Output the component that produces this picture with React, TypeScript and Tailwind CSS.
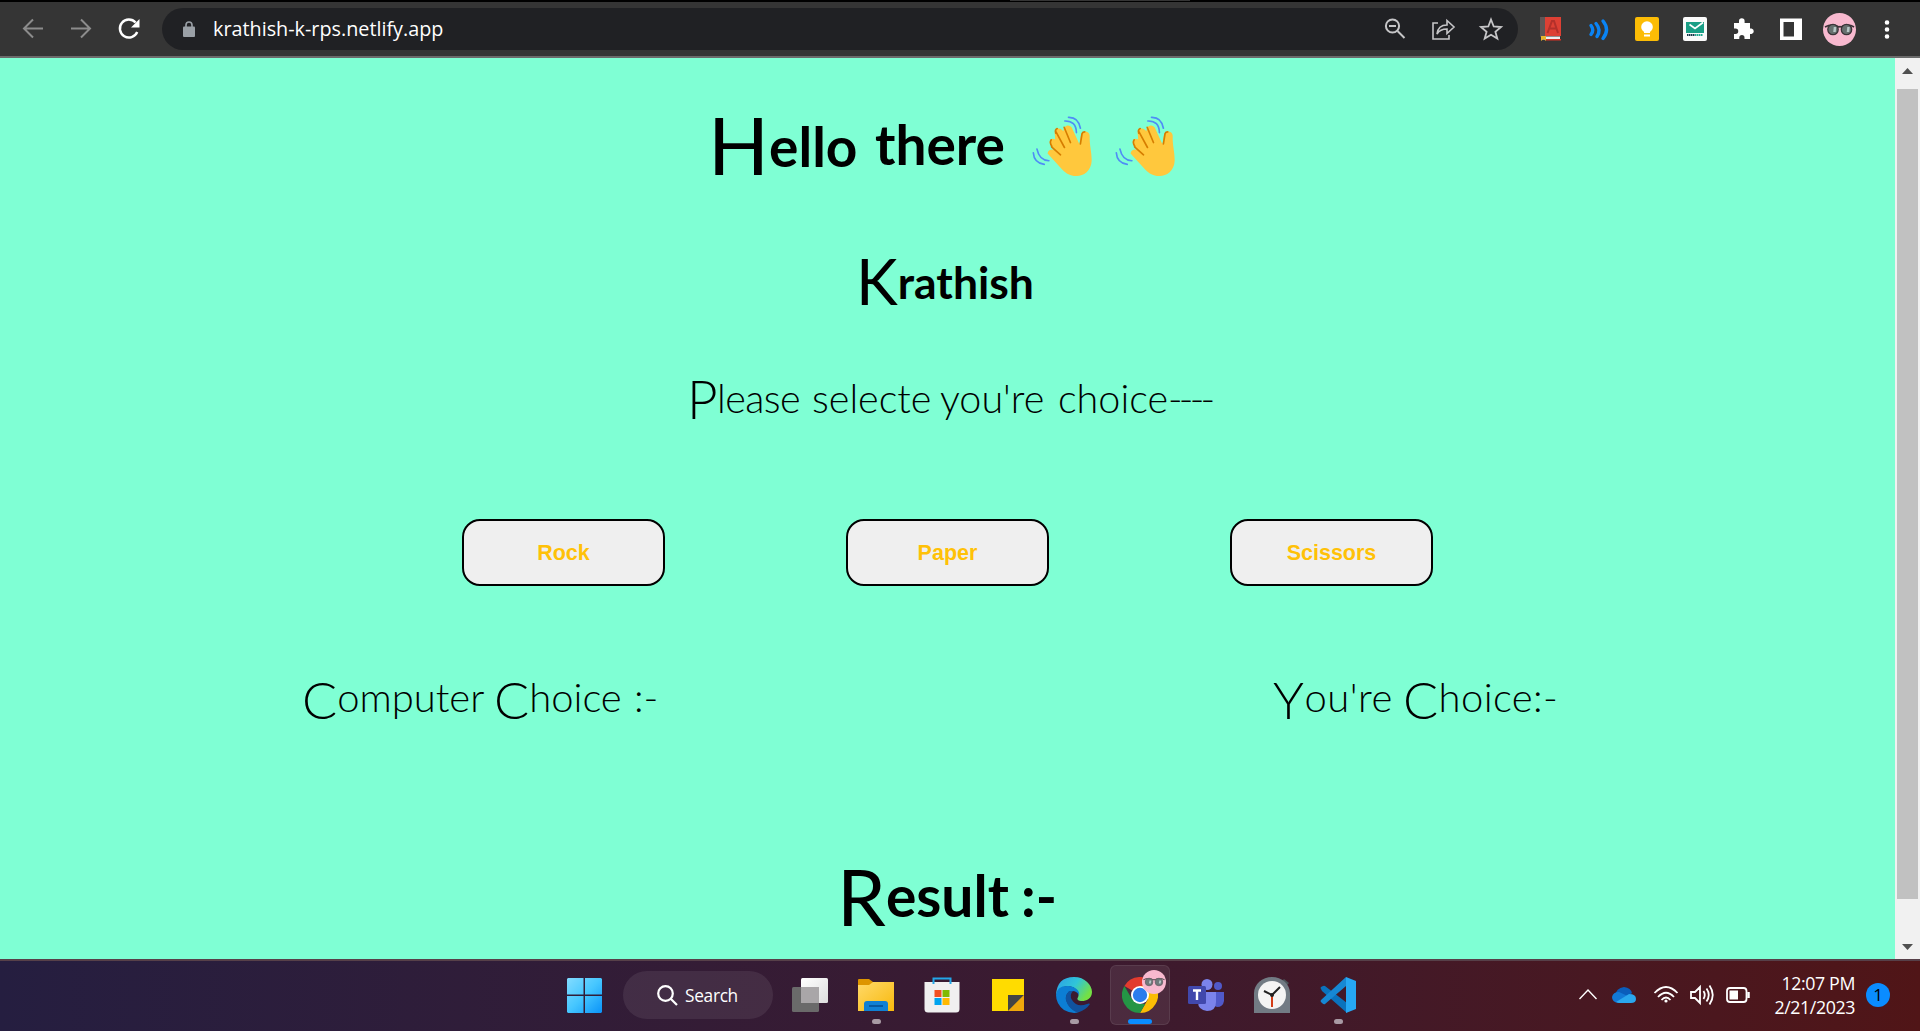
import type { ReactNode } from "react";

function Wave() {
  return (
    <svg viewBox="1025 70 185 190" className="mt-px ml-px h-[63px] w-[62px] shrink-0">
      <path d="M1071 186C1072 175 1085 170 1092 177L1078 155C1075 142 1086 138 1094 144L1093 130C1089 115 1103 106 1113 114L1119 119C1117 103 1135 95 1144 108L1167 158L1171 133C1173 117 1196 115 1198 132C1197 162 1204 180 1204 207C1203 239 1178 255 1157 254C1139 253 1128 247 1115 234Z" fill="#ffc83d" />
      <path d="M1083 166L1110 190M1096 120L1122 168M1121 107L1140 153M1170 157L1175 126Q1177 121 1183 121M1082 145Q1076 153 1084 165M1100 111Q1092 115 1096 125" fill="none" stroke="#d67d00" strokeWidth="5" strokeLinecap="round" />
      <path d="M1134 77Q1164 76 1170 110M1123 88Q1157 87 1158 123M1039 173Q1046 207 1075 208M1028 184Q1030 215 1061 219" fill="none" stroke="#4f8df5" strokeWidth="5" strokeLinecap="round" />
    </svg>
  );
}

function Avatar({ className }: { className: string }) {
  return (
    <svg viewBox="0 0 34 34" className={className}>
      <circle cx="17" cy="17" r="17" fill="#f8b9cf" />
      <path d="M2 14Q9 10 16 14Q17 13 18 14Q25 10 32 14" fill="none" stroke="#5b5358" strokeWidth="1.6" />
      <circle cx="10" cy="17" r="5.4" fill="#6f797b" stroke="#6b6368" strokeWidth="1.2" />
      <circle cx="24" cy="17" r="5.4" fill="#6f797b" stroke="#6b6368" strokeWidth="1.2" />
      <path d="M12 15L11 19M26 15L25 19" stroke="#b8c8c8" strokeWidth="2.5" />
    </svg>
  );
}

function Toolbar() {
  return (
    <header className="flex h-[58px] flex-col border-b-2 border-[#6b6b6b] bg-[#353535]">
      <div className="h-[2px] shrink-0 bg-black pl-[1010px]">
        <div className="h-px w-[180px] bg-[#353535]" />
      </div>
      <div className="flex h-[54px] items-center">
        <svg viewBox="0 0 162 54" className="h-[54px] w-[162px] shrink-0" fill="none">
          <path d="M43 26.5H24M33 17.5L24 26.5L33 35.5M71 26.5H90M81 17.5L90 26.5L81 35.5" stroke="#8c8c8c" strokeWidth="2" />
          <path d="M137.2 30A9 9 0 1 1 135.6 20.5" stroke="#fff" strokeWidth="2.4" />
          <path d="M139.500 17V25.500H131Z" fill="#fff" />
        </svg>
        <div className="flex h-[42px] w-[1356px] items-center rounded-full bg-[#202124]">
          <svg viewBox="0 0 12 16" className="ml-[21px] h-4 w-3">
            <rect y="5.500" width="12" height="10.500" rx="1" fill="#9aa0a6" />
            <path d="M3 6V4A3 3 0 0 1 9 4V6" fill="none" stroke="#9aa0a6" strokeWidth="1.6" />
          </svg>
          <span className="ml-[18px] whitespace-nowrap font-['Open_Sans','Noto_Sans',sans-serif] text-[19.8px] text-white">krathish-k-rps.netlify.app</span>
          <svg viewBox="1375 0 143 42" className="ml-auto h-[42px] w-[143px]" fill="none" stroke="#c6c6c8" strokeWidth="2">
            <circle cx="1392.500" cy="18" r="6.600" />
            <path d="M1397.500 23L1404.500 30M1389 18H1396" />
            <path d="M1438 15H1433V31H1449V27M1437 26Q1438 17 1447 17V12.500L1454 19L1447 25.500V21Q1440 21 1437 26Z" strokeWidth="1.600" />
            <path d="M1491 11.500L1493.700 18.500L1501 19L1495.400 23.700L1497.300 30.500L1491 26.700L1484.700 30.500L1486.600 23.700L1481 19L1488.300 18.500Z" strokeWidth="1.800" />
          </svg>
        </div>
        <svg viewBox="1518 2 402 54" className="h-[54px] w-[402px] shrink-0">
          <rect x="1540" y="17" width="6" height="20" fill="#5f5555" />
          <rect x="1545" y="17" width="16" height="19" fill="#dd4034" />
          <path d="M1547.500 33L1552 21H1554L1558 33M1549 28.500H1556.500" fill="none" stroke="#b3302a" strokeWidth="2" />
          <rect x="1542" y="36.500" width="18" height="3" fill="#eee" />
          <path d="M1541 36H1546V41L1543.500 39L1541 41Z" fill="#e9b52c" />
          <rect x="1546" y="39" width="15" height="1.500" fill="#d33227" />
          <g fill="none" stroke="#0a84f5" strokeWidth="3.400" strokeLinecap="round">
            <path d="M1591 25.500Q1594.500 30 1591 34.500" />
            <path d="M1596 23.500Q1601.500 30 1597 36.500" />
            <path d="M1603 21Q1610 29.500 1603 38.500" />
          </g>
          <rect x="1635" y="17" width="24" height="24" rx="2" fill="#fcbc05" />
          <circle cx="1647" cy="27" r="5.800" fill="#fff" />
          <path d="M1644 30H1650V33H1644ZM1644 34.500H1650V36.500H1644Z" fill="#fff" />
          <rect x="1683" y="17" width="24" height="24" rx="2" fill="#fafafa" />
          <rect x="1686" y="22" width="18" height="11" fill="#1a9e85" />
          <path d="M1689.500 24.500L1695 28.500L1703 22.500" fill="none" stroke="#fff" strokeWidth="1.700" />
          <path d="M1687 35H1695" stroke="#17394a" strokeWidth="2" strokeDasharray="1.500 .5" />
          <path d="M1695 35H1703" stroke="#1fa88e" strokeWidth="2" strokeDasharray="1.500 .5" />
          <path d="M1734 23H1739V21A2.800 2.800 0 0 1 1744.600 21V23H1750V28.500H1751.500A2.800 2.800 0 0 1 1751.500 34H1750V39H1744.500V37.500A2.600 2.600 0 0 0 1739.300 37.500V39H1734V34H1735.500A2.700 2.700 0 0 0 1735.500 28.500H1734Z" fill="#fff" />
          <path d="M1780 18.500H1802V40H1780ZM1783.500 22V36.500H1794V22Z" fillRule="evenodd" fill="#fff" />
          <g transform="translate(1823 13)">
            <circle cx="16.500" cy="16.500" r="16.500" fill="#f8b9cf" />
            <path d="M2 14Q9 10 16 14Q17 13 18 14Q25 10 31 14" fill="none" stroke="#3b3338" strokeWidth="1.600" />
            <circle cx="10" cy="16.500" r="5.200" fill="#66706f" stroke="#3b3338" strokeWidth="1.300" />
            <circle cx="23.500" cy="16.500" r="5.200" fill="#66706f" stroke="#3b3338" strokeWidth="1.300" />
            <path d="M12 14L11.500 19M25.500 14L25 19" stroke="#b6c6c6" strokeWidth="2.500" />
          </g>
          <path d="M1887 22.500h.01M1887 29.500h.01M1887 36.500h.01" stroke="#fff" strokeWidth="4.600" strokeLinecap="round" />
        </svg>
      </div>
    </header>
  );
}

function Choice({ children }: { children: string }) {
  return (
    <button className="h-[67px] w-[203px] rounded-[18px] border-2 border-black bg-[#efefef] pt-[2px] font-['Liberation_Sans',Arial,sans-serif] text-[21.5px] font-bold text-[#ffc107]">
      {children}
    </button>
  );
}

function Game() {
  return (
    <main className="flex h-[901px] min-w-0 flex-1 flex-col bg-[#7fffd4] font-['Lato',sans-serif] whitespace-nowrap text-black">
      <h1 className="flex h-[140px] pt-[56px] pl-[708px] text-[55px] leading-[60px] font-bold">
        <span className="block w-[167px] first-letter:align-[-8px] first-letter:text-[80px] first-letter:font-normal">Hello</span>
        <span className="block w-[156px]">there</span>
        <span className="flex gap-5"><Wave /><Wave /></span>
      </h1>
      <h2 className="h-[110px] pt-[58px] pl-[856px] text-[44.5px] leading-[50px] font-bold">
        <span className="block first-letter:align-[-6px] first-letter:text-[63px] first-letter:font-normal">Krathish</span>
      </h2>
      <p className="flex h-[211px] pt-[65px] pl-[687px] text-[39.5px] leading-[50px] font-light">
        <span className="block w-[125px] tracking-[-0.6px] first-letter:align-[-6px] first-letter:text-[53px]">Please</span>
        <span className="block w-[128px]">selecte</span>
        <span className="block w-[118px]">you're</span>
        <span className="block">choice<span className="tracking-[-3.8px]">----</span></span>
      </p>
      <div className="flex h-[67px] gap-[181px] pl-[462px]">
        <Choice>Rock</Choice>
        <Choice>Paper</Choice>
        <Choice>Scissors</Choice>
      </div>
      <div className="flex h-[200px] pt-[86px] pl-[302px] text-[40px] leading-[50px] font-light">
        <p className="flex w-[971px]">
          <span className="block w-[192px] first-letter:align-[-7px] first-letter:text-[52px]">Computer</span>
          <span className="block w-[140px] first-letter:align-[-7px] first-letter:text-[52px]">Choice</span>
          <span>:-</span>
        </p>
        <p className="flex">
          <span className="block w-[130px] tracking-[0.5px] first-letter:align-[-7px] first-letter:text-[52px]">You're</span>
          <span className="block tracking-[0.4px] first-letter:align-[-7px] first-letter:text-[52px]">Choice:-</span>
        </p>
      </div>
      <h1 className="flex pt-[79px] pl-[837px] text-[57px] leading-[60px] font-bold">
        <span className="block w-[184px] first-letter:align-[-9px] first-letter:text-[78px] first-letter:font-normal">Result</span>
        <span>:-</span>
      </h1>
    </main>
  );
}

function Scrollbar() {
  return (
    <div className="flex h-[901px] w-[25px] flex-col items-center bg-[#f1f1f1]">
      <svg viewBox="0 0 25 31" className="h-[31px] w-[25px]"><path d="M7 16L12.500 10L18 16Z" fill="#505050" /></svg>
      <div className="h-[810px] w-[21px] bg-[#c1c1c1]" />
      <svg viewBox="0 0 25 60" className="h-[60px] w-[25px]"><path d="M7 45L12.500 51L18 45Z" fill="#505050" /></svg>
    </div>
  );
}

function TaskItem({ children, dot = false, active = false }: { children: ReactNode; dot?: boolean; active?: boolean }) {
  return (
    <div className={active ? "relative mx-[3px] flex h-[60px] w-[60px] items-center justify-center rounded-md border border-white/8 bg-white/8" : "relative mx-[3px] flex h-[60px] w-[60px] items-center justify-center"}>
      {children}
      {dot && <i className="absolute bottom-px h-[5px] w-[9px] rounded-full bg-[#a89aa4]" />}
      {active && <i className="absolute bottom-0 h-[5px] w-6 rounded-full bg-[#0a8cff]" />}
    </div>
  );
}

const icon = "h-9 w-9";

function Taskbar() {
  return (
    <footer className="flex h-[72px] border-t-2 border-[#574049] bg-linear-to-r from-[#251e40] via-[#3b1a30] via-55% to-[#501517] pt-1 font-['Open_Sans','Noto_Sans',sans-serif] text-white">
      <div className="flex h-[60px] w-[1579px] items-center pl-[567px]">
        <svg viewBox="0 0 35 35" className="h-[35px] w-[35px]">
          <defs><linearGradient id="win" x2="1" y2="1"><stop stopColor="#83dcff" /><stop offset=".5" stopColor="#45c6ff" /><stop offset="1" stopColor="#0a93f8" /></linearGradient></defs>
          <path d="M1 0H16.500V16.500H0V1ZM18 0H34L35 1V16.500H18ZM0 18H16.500V35H1L0 34ZM18 18H35V34L34 35H18Z" fill="url(#win)" />
        </svg>
        <div className="ml-[21px] flex h-12 w-[150px] items-center rounded-full bg-white/8">
          <svg viewBox="0 0 21 21" className="ml-[34px] h-[21px] w-[21px]" fill="none" stroke="#fff" strokeWidth="2.200"><circle cx="8.500" cy="8.500" r="7.300" /><path d="M13.700 13.700L20 20" /></svg>
          <span className="ml-[7px] pt-px text-[17.300px] tracking-[-0.3px]">Search</span>
        </div>
        <div className="ml-[4px] flex">
          <TaskItem>
            <svg viewBox="0 0 36 36" className={icon}>
              <defs><linearGradient id="tv" x2="1" y2="1"><stop stopColor="#fff" /><stop offset="1" stopColor="#ddd" /></linearGradient></defs>
              <rect x="9" y="1" width="27" height="25" rx="1.500" fill="url(#tv)" /><rect y="10" width="27" height="25" rx="1.500" fill="#6a6a6a" /><path d="M9 10H27V26H9Z" fill="#a9a6a8" />
            </svg>
          </TaskItem>
          <TaskItem dot>
            <svg viewBox="0 0 36 36" className={icon}>
              <defs><linearGradient id="fo" x2="1" y2="1"><stop stopColor="#ffd969" /><stop offset="1" stopColor="#f8b90d" /></linearGradient></defs>
              <path d="M0 3Q0 2 1 2H11L15 5V9H0Z" fill="#dd9500" /><path d="M0 8H11L15 5H36V34H0Z" fill="url(#fo)" /><path d="M6 34V27Q6 24 9 24H27Q30 24 30 27V34Z" fill="#1080d4" /><path d="M11 29H25" stroke="#064f93" strokeWidth="1.600" />
            </svg>
          </TaskItem>
          <TaskItem>
            <svg viewBox="0 0 36 36" className={icon}>
              <path d="M.5 5H35.500V32Q35.500 35.500 32 35.500H4Q.5 35.500 .5 32Z" fill="#f0f0f0" /><path d="M9.500 7V1.500H26.500V7" fill="none" stroke="#22a7e8" strokeWidth="2" /><path d="M10.500 13H17.500V20H10.500Z" fill="#f25022" /><path d="M18.500 13H25.500V20H18.500Z" fill="#7fba00" /><path d="M10.500 21H17.500V28H10.500Z" fill="#00a4ef" /><path d="M18.500 21H25.500V28H18.500Z" fill="#ffb900" />
            </svg>
          </TaskItem>
          <TaskItem>
            <svg viewBox="0 0 36 36" className={icon}><path d="M2 2H34V18L18 34H2Z" fill="#ffdc00" /><path d="M18 18H34L18 34Z" fill="#444" /><path d="M34 18V34H18Z" fill="#efa80c" /></svg>
          </TaskItem>
          <TaskItem dot>
            <svg viewBox="0 0 36 36" className={icon}>
              <defs><linearGradient id="ed" x2="1" y2=".5"><stop stopColor="#2b9de8" /><stop offset=".55" stopColor="#30c5d8" /><stop offset="1" stopColor="#74e044" /></linearGradient></defs>
              <path d="M0 18Q1 0 18 0C29 0 36 8 36 15C36 24 25 25.500 22 23C20 21 24 20 22 15Q19 9 11 9Q3 10 0 18Z" fill="url(#ed)" />
              <path d="M0 18Q1 8 13 9C20 10 24 14 23 18C20 13 14 13 11 17C8 24 13 31 22 35.500Q15 37 8 33Q0 27 0 18Z" fill="#0c7ed4" />
              <path d="M13 14Q7 20 12 28Q16 34 22 35.500Q30 33 34 27Q33 26 31 27Q21 31 16 23Q13 18 17 14Z" fill="#10529f" />
            </svg>
          </TaskItem>
          <TaskItem active>
            <svg viewBox="0 0 36 36" className={icon}>
              <path d="M18 18L2.400 9A18 18 0 0 1 33.600 9Z" fill="#e33b2e" /><path d="M18 9H33.600A18 18 0 0 1 18 36L25.800 22.500Z" fill="#fbbc05" /><path d="M2.400 9L10.200 22.500L18 27H23.200L18 36A18 18 0 0 1 2.400 9Z" fill="#249545" /><circle cx="18" cy="18" r="9" fill="#fff" /><circle cx="18" cy="18" r="7.200" fill="#2b7ced" />
            </svg>
            <Avatar className="absolute top-[4px] right-[3px] h-6 w-6" />
          </TaskItem>
          <TaskItem>
            <svg viewBox="0 0 36 36" className={icon}>
              <circle cx="30" cy="9" r="4" fill="#5059c9" /><path d="M25 15H36V24Q35 30 29 30Q25 29 25 24Z" fill="#5059c9" /><circle cx="19" cy="7.500" r="5.500" fill="#7b83eb" /><path d="M10 15H28V25Q28 34 19 34Q10 33 10 25Z" fill="#7b83eb" /><rect y="9" width="18" height="18" rx="1.500" fill="#4148ac" /><path d="M5 13.500H13M9 13.500V23" stroke="#fff" strokeWidth="2.400" />
            </svg>
          </TaskItem>
          <TaskItem>
            <svg viewBox="0 0 36 36" className={icon}>
              <path d="M30 2L35 6L32 9L27 5Z" fill="#4a5358" /><path d="M0 36V16A18 16 0 0 1 36 16V36Z" fill="#727b84" /><circle cx="18" cy="18" r="14" fill="#f4f4f4" /><path d="M10 14L18 18L26 10" fill="none" stroke="#222" strokeWidth="2" /><path d="M18 18V30" stroke="#d43d17" strokeWidth="2" /><circle cx="18" cy="18" r="2" fill="#222" />
            </svg>
          </TaskItem>
          <TaskItem dot>
            <svg viewBox="0 0 36 36" className={icon}>
              <path d="M1 12Q0 11 1 10L3 9Q4 8.500 5 9L27 26V36L2 14Z" fill="#0a72bd" /><path d="M1 25Q0 24 1 23L26 0V9L5 27Q4 28 2 26Z" fill="#1688d4" /><path d="M26 0L36 4V32L26 36Z" fill="#26a7f3" />
            </svg>
          </TaskItem>
        </div>
      </div>
      <svg viewBox="1579 965 175 60" className="h-[60px] w-[175px] shrink-0" fill="none" stroke="#fff" strokeWidth="1.800">
        <path d="M1579.500 999L1588 990L1596.500 999" strokeWidth="1.400" />
        <g stroke="none"><path d="M1615 996Q1616 988 1624 987Q1631 988 1632 993L1624 1000Z" fill="#0a5dbb" /><path d="M1618 1003Q1612 1002 1612 997Q1613 992 1619 992L1632 998L1628 1003Z" fill="#1279d6" /><path d="M1616 1002L1629 994Q1636 994 1636 999Q1636 1003 1631 1003H1619Z" fill="#2aa7ee" /></g>
        <path d="M1654.500 993Q1666 981 1677.500 993M1658 997Q1666 988.500 1674 997M1661.500 1000Q1666 995 1670.500 1000" /><circle cx="1666" cy="1001" r="1.600" fill="#fff" stroke="none" />
        <path d="M1691 992H1695L1700 987V1003L1695 998H1691ZM1703.500 991Q1706 995 1703.500 999M1706.500 988.500Q1711 995 1706.500 1001.500M1709.500 985.500Q1716 995 1709.500 1004.500" />
        <rect x="1727" y="988" width="19.500" height="14" rx="3" /><path d="M1729.500 990.500H1738V999.500H1729.500Z" fill="#fff" stroke="none" /><path d="M1748.500 992V998" strokeWidth="2.500" />
      </svg>
      <div className="flex h-[60px] w-[101px] flex-col items-end justify-center whitespace-nowrap pb-px text-[17.800px] leading-6 tracking-[-0.4px]">
        <span>12:07 PM</span>
        <span>2/21/2023</span>
      </div>
      <span className="mt-[18px] ml-[11px] flex h-6 w-6 items-center justify-center rounded-full bg-[#0a8cff] text-[17px] text-black">1</span>
    </footer>
  );
}

export default function App() {
  return (
    <div className="h-[1031px] w-[1920px] overflow-hidden">
      <Toolbar />
      <div className="flex h-[901px] overflow-hidden">
        <Game />
        <Scrollbar />
      </div>
      <Taskbar />
    </div>
  );
}
